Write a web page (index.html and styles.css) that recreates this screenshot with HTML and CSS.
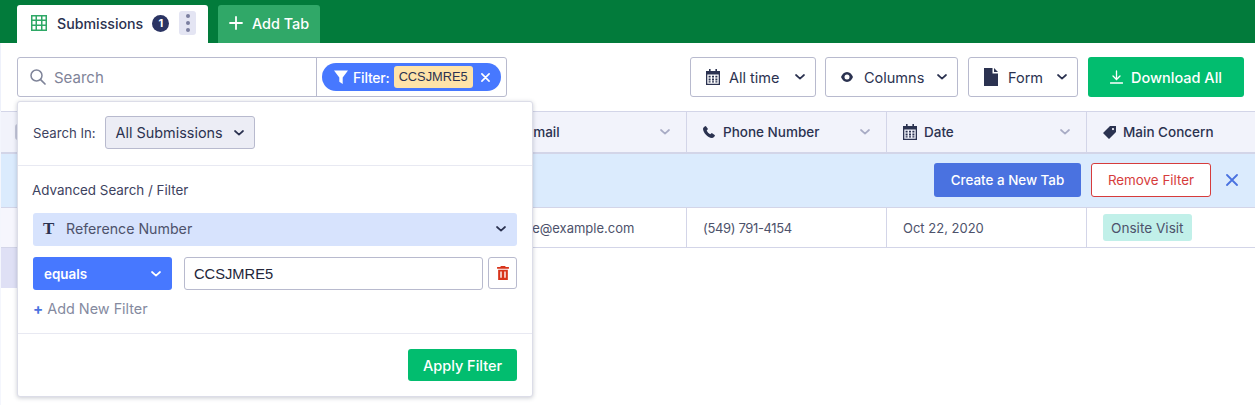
FILE: index.html
```html
<!DOCTYPE html>
<html lang="en">
<head>
<meta charset="utf-8">
<title>Submissions</title>
<link rel="stylesheet" href="styles.css">
</head>
<body>
<svg class="defs" width="0" height="0" aria-hidden="true">
  <symbol id="chev" viewBox="0 0 10 6"><path d="M1 1l4 3.600L9 1" fill="none" stroke="currentColor" stroke-width="1.700" stroke-linecap="round" stroke-linejoin="round"/></symbol>
  <symbol id="cal" viewBox="0 0 14 16"><path fill="currentColor" fill-rule="evenodd" d="M3 0h1.600v2h4.800V0H11v2h3v14H0V2h3zM1.300 5.500v9.200h11.400V5.500zM2.600 6.800h2v1.800h-2zm3.400 0h2v1.800H6zm3.400 0h2v1.800h-2zM2.600 9.600h2v1.800h-2zm3.400 0h2v1.800H6zm3.400 0h2v1.800h-2zM2.600 12.200h2v1.400h-2zm3.400 0h2v1.400H6zm3.400 0h2v1.400h-2z"/></symbol>
</svg>
<div class="page">
  <header class="tabs">
    <div class="tab">
      <svg class="tab-grid" viewBox="0 0 16 16" width="16" height="16"><path fill="#2ea866" fill-rule="evenodd" d="M0 0h16v16H0zM1.500 1.500v3h3v-3zm4.500 0v3h4v-3zm5.500 0v3h3v-3zM1.500 6v3.500h3V6zM6 6v3.500h4V6zm5.500 0v3.500h3V6zM1.500 11v3.500h3V11zM6 11v3.500h4V11zm5.500 0v3.500h3V11z"/></svg>
      <span class="tab-name">Submissions</span>
      <span class="tab-count">1</span>
      <span class="tab-more"><i></i><i></i><i></i></span>
    </div>
    <div class="add-tab">
      <svg viewBox="0 0 14 14" width="14" height="14"><path d="M7 1v12M1 7h12" stroke="#fff" stroke-width="1.800" stroke-linecap="round"/></svg>
      <span>Add Tab</span>
    </div>
  </header>

  <section class="toolbar">
    <div class="search">
      <div class="search-input">
        <svg viewBox="0 0 16 16" width="16" height="16"><circle cx="6.500" cy="6.500" r="5.500" fill="none" stroke="#7f8499" stroke-width="1.500"/><path d="M10.600 10.600L15 15" stroke="#7f8499" stroke-width="1.700" stroke-linecap="round"/></svg>
        <span>Search</span>
      </div>
      <div class="search-filter">
        <div class="chip">
          <svg viewBox="0 0 14 14" width="14" height="14"><path fill="#fff" d="M0 .5h14L8.700 7.500V14l-3.400-2.200V7.500z"/></svg>
          <span class="chip-label">Filter:</span>
          <span class="chip-value">CCSJMRE5</span>
          <svg viewBox="0 0 10 10" width="9" height="9"><path d="M1 1l8 8M9 1L1 9" stroke="#fff" stroke-width="1.800" stroke-linecap="round"/></svg>
        </div>
      </div>
    </div>
    <div class="actions">
      <button class="btn w-time"><svg class="ico"><use href="#cal"/></svg><span>All time</span><svg class="chev"><use href="#chev"/></svg></button>
      <button class="btn w-cols"><svg viewBox="0 0 12 10" width="12" height="10"><path fill="#2b3250" fill-rule="evenodd" d="M6 0c3 0 5 2.500 6 5-1 2.500-3 5-6 5S1 7.500 0 5c1-2.500 3-5 6-5zm0 2.500a2.500 2.500 0 100 5 2.500 2.500 0 000-5z"/></svg><span>Columns</span><svg class="chev"><use href="#chev"/></svg></button>
      <button class="btn w-form"><svg viewBox="0 0 14 18" width="14" height="18"><path fill="#2b3250" d="M0 0h8.500v5.500H14V18H0zM10 0l4 4h-4z"/></svg><span>Form</span><svg class="chev"><use href="#chev"/></svg></button>
      <button class="btn-download"><svg viewBox="0 0 13 14" width="13" height="14"><path d="M6.500 1v8M3 6l3.500 3.500L10 6M.5 13h12" fill="none" stroke="#fff" stroke-width="1.300" stroke-linecap="round"/></svg><span>Download All</span></button>
    </div>
  </section>

  <section class="table">
    <div class="thead">
      <div class="th c-rest"><span class="check"></span></div>
      <div class="th c-email"><span class="th-name email-name">Email</span><svg class="th-chev"><use href="#chev"/></svg></div>
      <div class="th c-mid"><svg class="th-phone" viewBox="0 0 12 12" width="12" height="12"><path fill="#2b3250" d="M2.800 0L5 2.900 3.700 4.400c.6 1.500 2 3 3.500 3.800L8.800 7 12 9.300C11.400 11 10.300 12 9 12 4.500 11.600.4 7 0 3 .1 1.700 1.200.4 2.800 0z"/></svg><span class="th-name">Phone Number</span><svg class="th-chev"><use href="#chev"/></svg></div>
      <div class="th c-mid"><svg class="ico"><use href="#cal"/></svg><span class="th-name">Date</span><svg class="th-chev"><use href="#chev"/></svg></div>
      <div class="th c-last"><svg viewBox="0 0 13 13" width="13" height="13"><path fill="#2b3250" fill-rule="evenodd" d="M7 0h6v6l-7 7-6-6zm3 2a1.100 1.100 0 100 2.200A1.100 1.100 0 0010 2z"/></svg><span class="th-name">Main Concern</span></div>
    </div>
    <div class="banner">
      <button class="btn-new">Create a New Tab</button>
      <button class="btn-remove">Remove Filter</button>
      <svg class="banner-x" viewBox="0 0 12 12" width="12" height="12"><path d="M1 1l10 10M11 1L1 11" stroke="#4a72e0" stroke-width="1.800" stroke-linecap="round"/></svg>
    </div>
    <div class="row">
      <div class="td c-rest"></div>
      <div class="td c-email">jane@example.com</div>
      <div class="td c-mid"><span class="phone">(549) 791-4154</span></div>
      <div class="td c-mid">Oct 22, 2020</div>
      <div class="td c-last"><span class="tag">Onsite Visit</span></div>
    </div>
    <div class="row-selected"></div>
  </section>

  <aside class="popup">
    <div class="pop-top">
      <span class="pop-label">Search In:</span>
      <div class="pop-select"><span>All Submissions</span><svg class="chev"><use href="#chev"/></svg></div>
    </div>
    <div class="pop-mid">
      <div class="pop-title">Advanced Search / Filter</div>
      <div class="field">
        <span class="field-t">T</span>
        <span class="field-name">Reference Number</span>
        <svg class="chev"><use href="#chev"/></svg>
      </div>
      <div class="cond">
        <div class="cond-op"><span>equals</span><svg class="chev"><use href="#chev"/></svg></div>
        <div class="cond-val">CCSJMRE5</div>
        <div class="cond-del"><svg viewBox="0 0 11 13" width="12" height="14"><path fill="#d8341b" fill-rule="evenodd" d="M3.500 0h4l.5 1h3v1.500H0V1h3zM1 3.500h9V13H1zM3 5v6h1.300V5zm3.700 0v6H8V5z"/></svg></div>
      </div>
      <div class="add-filter"><b>+</b> Add New Filter</div>
    </div>
    <div class="pop-foot"><button class="btn-apply">Apply Filter</button></div>
  </aside>
</div>
</body>
</html>
```

FILE: styles.css
```css
* { box-sizing: border-box; }
html, body { margin: 0; padding: 0; background: #fff; }
body { font-family: "Inter", "Liberation Sans", sans-serif; color: #2b3250; overflow: hidden; }
.defs { position: absolute; }
button { font: inherit; cursor: pointer; }
.page { position: relative; width: 1255px; height: 405px; overflow: hidden; }

.tabs { height: 43px; background: #027b3b; display: flex; gap: 10px; padding: 5px 0 0 17px; }
.tab { width: 191px; background: #fff; border-radius: 3px 3px 0 0; display: flex; align-items: center; padding: 0 0 2px 14px; }
.tab-name { margin-left: 10px; font-size: 14.200px; font-weight: 500; color: #2b3250; }
.tab-count { width: 17px; height: 17px; margin-left: 9px; border-radius: 50%; background: #2b3463; color: #fff; font-size: 11px; font-weight: 700; display: flex; align-items: center; justify-content: center; }
.tab-more { width: 17px; height: 24px; margin-left: 10px; border-radius: 3px; background: #e4e5f3; display: flex; flex-direction: column; align-items: center; justify-content: center; gap: 3px; }
.tab-more i { width: 4px; height: 4px; border-radius: 50%; background: #7b7fa0; }
.add-tab { width: 102px; background: #30a868; border-radius: 3px 3px 0 0; display: flex; align-items: center; gap: 9px; padding: 0 0 2px 11px; color: #fff; font-size: 14.400px; font-weight: 500; }

.toolbar { height: 68px; display: flex; justify-content: space-between; padding: 14px 11px 14px 16px; border-left: 1px solid #eef1fb; }
.search { width: 490px; height: 40px; display: flex; border: 1px solid #b8bace; border-radius: 3px; }
.search-input { width: 299px; display: flex; align-items: center; gap: 8px; padding-left: 12px; border-right: 1px solid #b8bace; color: #7f8499; font-size: 15px; }
.search-filter { flex: 1; display: flex; align-items: center; padding-left: 5px; }
.chip { width: 179px; height: 28px; border-radius: 14px; background: #4778ff; display: flex; align-items: center; padding-left: 12px; color: #fff; font-size: 14px; }
.chip-label { margin-left: 5px; font-weight: 500; letter-spacing: -.2px; }
.chip-value { margin: 0 8px 0 4px; height: 22px; padding: 0 5px; border-radius: 3px; background: #ffe3a8; color: #2b3250; font-family: "Liberation Sans", sans-serif; font-size: 12.800px; line-height: 22px; }

.actions { display: flex; gap: 9px; }
.btn { height: 40px; display: flex; align-items: center; border: 1px solid #b8bace; border-radius: 3px; background: #fff; color: #2b3250; font-size: 14.500px; padding: 0; }
.btn > span { margin-left: 10px; flex: 1; text-align: left; }
.w-time > span { margin-left: 9px; }
.w-cols > span { margin-left: 11px; }
.ico { width: 14px; height: 16px; color: #2b3250; flex: none; }
.chev { width: 10px; height: 6px; color: #2b3250; flex: none; }
.w-time { width: 126px; padding: 0 10px 0 15px; }
.w-cols { width: 133px; padding: 0 10px 0 15px; }
.w-form { width: 110px; margin-left: 1px; padding: 0 10px 0 15px; }
.btn-download { width: 156px; height: 40px; margin-left: 1px; display: flex; align-items: center; justify-content: center; gap: 8px; border: 0; border-radius: 3px; background: #02bd6f; color: #fff; font-size: 14.500px; font-weight: 500; }

.table { height: 294px; display: flex; flex-direction: column; border-left: 1px solid #f4f6fd; }
.thead { height: 41px; display: flex; background: #f2f3fb; border-top: 1px solid #d3d5e8; }
.th { display: flex; align-items: center; gap: 7px; border-right: 1px solid #d3d5e8; padding-left: 16px; font-size: 13.500px; font-weight: 500; }
.th-name { flex: 1; }
.email-name { padding-left: 23px; }
.th-chev { width: 10px; height: 6px; color: #a9acc5; margin-right: 16px; }
.th-phone { margin-right: 1px; }
.check { width: 16px; height: 16px; margin-left: -2px; background: #c5c7d8; border-radius: 3px; }
.c-rest { width: 485px; }
.c-email { width: 201px; }
.c-mid { width: 200px; }
.banner { height: 56px; display: flex; align-items: center; justify-content: flex-end; background: #dbebfd; border-top: 2px solid #d3d5e8; border-bottom: 1px solid #d3d5e8; padding: 0 17px 1px 0; }
.btn-new { width: 147px; height: 34px; border: 0; border-radius: 3px; background: #4a72e0; color: #fff; font-size: 13.400px; font-weight: 500; }
.btn-remove { width: 120px; height: 34px; margin-left: 10px; border: 1px solid #d63c3c; border-radius: 3px; background: #fff; color: #d63c3c; font-size: 13.400px; }
.banner-x { margin-left: 15px; }
.row { height: 40px; display: flex; border-bottom: 1px solid #d3d5e8; background: #fff; }
.td { display: flex; align-items: center; border-right: 1px solid #d3d5e8; padding-left: 16px; font-size: 13px; color: #4d526b; }
.td.c-email { padding-left: 28px; }
.td.c-rest { background: #f6f6fd; }
.th.c-last, .td.c-last { flex: 1; border-right: 0; }
.phone { letter-spacing: -.35px; }
.tag { height: 27px; display: flex; align-items: center; padding: 0 8px; border-radius: 3px; background: #c1f0e9; font-size: 13.600px; }
.row-selected { width: 16px; height: 40px; background: #dfe0f5; }

.popup { position: absolute; left: 17px; top: 101px; width: 516px; height: 296px; background: #fff; border: 1px solid #dcdde8; border-radius: 3px; box-shadow: 0 1px 4px rgba(43, 50, 80, .25); display: flex; flex-direction: column; }
.pop-top { height: 64px; display: flex; align-items: center; padding: 0 15px 2px; border-bottom: 1px solid #e8e9f2; }
.pop-label { font-size: 13.200px; color: #3d4260; }
.pop-select { width: 150px; height: 33px; margin-left: 9px; display: flex; align-items: center; justify-content: space-between; padding: 0 10px; background: #ecedf5; border: 1px solid #b8bace; border-radius: 3px; font-size: 14.400px; }
.pop-mid { height: 168px; border-bottom: 1px solid #e8e9f2; padding: 16px 15px 0 15px; }
.pop-title { font-size: 13.400px; color: #3d4260; height: 17px; margin-left: -1px; }
.field { height: 33px; margin-top: 14px; display: flex; align-items: center; padding: 0 11px 2px 10px; background: #d7e3fd; border-radius: 3px; font-size: 14.200px; color: #4d526b; }
.field-t { font-family: "Liberation Serif", serif; font-weight: 700; font-size: 17px; color: #2b3250; width: 23px; }
.field-name { flex: 1; }
.cond { display: flex; margin-top: 11px; align-items: flex-start; }
.cond-op { width: 139px; height: 33px; display: flex; align-items: center; justify-content: space-between; padding: 0 11px 0 11px; background: #4778ff; border-radius: 3px; color: #fff; font-size: 13.400px; font-weight: 600; }
.cond-op .chev { color: #fff; }
.cond-val { width: 299px; height: 33px; margin-left: 12px; display: flex; align-items: center; padding-left: 9px; border: 1px solid #b8bace; border-radius: 3px; font-family: "Liberation Sans", sans-serif; font-size: 14.700px; color: #23263a; }
.cond-del { width: 29px; height: 32px; margin-left: 5px; display: flex; align-items: center; justify-content: center; border: 1px solid #b8bace; border-radius: 3px; }
.add-filter { margin-top: 9px; font-size: 14.400px; color: #858a9f; }
.add-filter b { color: #4a72e0; font-size: 15px; }
.pop-foot { flex: 1; display: flex; justify-content: flex-end; padding: 15px 15px 0 0; }
.btn-apply { width: 109px; height: 32px; border: 0; border-radius: 3px; background: #02bd6f; color: #fff; font-size: 14.500px; font-weight: 500; }
```
